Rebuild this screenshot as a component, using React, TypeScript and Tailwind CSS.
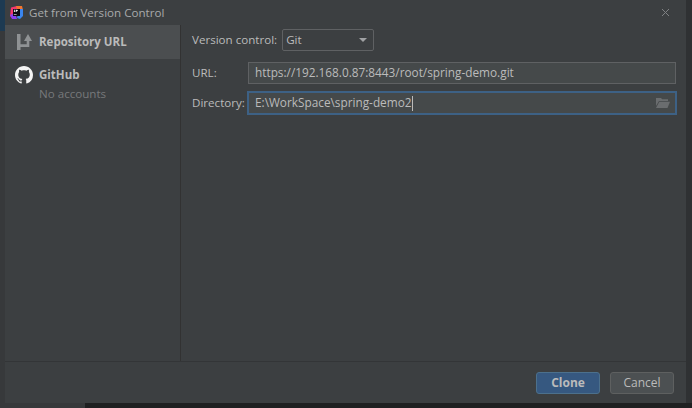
import type { FC } from 'react'

const labelClass = "text-[11.6px] text-[#bbbbbb] font-['Open_Sans',sans-serif]"

const RepoIcon: FC = () => (
  <svg width="16" height="16" viewBox="0 0 16 16" fill="#8f9294">
    <path d="M0 0h3.500v10.300h6.200V7H7l4-7 4 7h-2.700v6H3.500v3H0z" />
  </svg>
)

const GithubIcon: FC = () => (
  <svg width="18" height="18" viewBox="0 0 16 16" fill="#f4f4f4">
    <path d="M8 0C3.58 0 0 3.58 0 8c0 3.54 2.29 6.53 5.47 7.59.4.07.55-.17.55-.38 0-.19-.01-.82-.01-1.49-2.01.37-2.53-.49-2.69-.94-.09-.23-.48-.94-.82-1.13-.28-.15-.68-.52-.01-.53.63-.01 1.08.58 1.23.82.72 1.21 1.87.87 2.33.66.07-.52.28-.87.51-1.07-1.78-.2-3.64-.89-3.64-3.95 0-.87.31-1.59.82-2.15-.08-.2-.36-1.02.08-2.12 0 0 .67-.21 2.2.82.64-.18 1.32-.27 2-.27s1.36.09 2 .27c1.53-1.04 2.2-.82 2.2-.82.44 1.1.16 1.92.08 2.12.51.56.82 1.27.82 2.15 0 3.07-1.87 3.75-3.65 3.95.29.25.54.73.54 1.48 0 1.07-.01 1.93-.01 2.2 0 .21.15.46.55.38A8.01 8.01 0 0 0 16 8c0-4.42-3.58-8-8-8z" />
  </svg>
)

const AppIcon: FC = () => (
  <svg width="13" height="13" viewBox="0 0 13 13">
    <path d="M1 1.500 7 0l1 6-5 7-3-3z" fill="#f5366f" />
    <path d="M6 0h6l1 4-5 2z" fill="#f2762e" />
    <path d="M0 9l5-2 2 6H2z" fill="#8a3ff2" />
    <path d="M9 3h4v7l-3 3-3-1z" fill="#3a86f0" />
    <rect x="3" y="3" width="7" height="7" fill="#0b0b12" />
    <path d="M3.800 3.700h1.500v.5h-.4v1.300h.4v.5H3.800v-.5h.4V4.200h-.4zM5.800 3.700h1.200c.6 0 .8.300.8.800s-.3.800-.8.800h-.5v.7h-.7z" fill="#ffffff" />
    <rect x="3.800" y="8.300" width="2.800" height="0.600" fill="#ffffff" />
  </svg>
)

const FolderIcon: FC = () => (
  <svg width="14" height="10" viewBox="0 0 14 10">
    <path d="M0 0h5l1.200 1.300H12V3H3L0 8z" fill="#6a6d6f" />
    <path d="M3.300 3.800H14L11.500 10H0z" fill="#6a6d6f" />
  </svg>
)

export default function App() {
  return (
    <div className="w-[692px] h-[408px] bg-[#37393b] flex flex-col overflow-hidden font-['Open_Sans',sans-serif]">
      <div className="flex h-[403px]">
        {/* window behind the dialog */}
        <div className="w-[5px] h-full flex flex-col">
          <div className="h-[31px] bg-[#1d3a52]" />
        </div>

        <div className="w-[681px] h-[403px] bg-[#3c3f41] flex flex-col">
          <div className="h-[25px] flex items-center justify-between pl-[5px] pr-[16px]">
            <div className="flex items-center gap-[6px]">
              <AppIcon />
              <span className="text-[11.6px] text-[#a8aaab]">Get from Version Control</span>
            </div>
            <svg width="9" height="9" viewBox="0 0 9 9" className="text-[#7f8183]">
              <path d="M1 1l7 7M8 1l-7 7" stroke="currentColor" strokeWidth="1" />
            </svg>
          </div>

          <div className="flex-1 flex min-h-0 border-b border-[#333537]">
            <aside className="w-[176px] border-r border-[#323232] flex flex-col">
              <div className="h-[34px] bg-[#4b4e50] flex items-center gap-[6px] pl-[12px]">
                <RepoIcon />
                <span className="text-[11.5px] font-bold text-[#bbbbbb]">Repository URL</span>
              </div>
              <div className="flex gap-[6px] pl-[10px] pt-[7px]">
                <GithubIcon />
                <div className="flex flex-col">
                  <span className="text-[11.5px] font-bold text-[#bbbbbb] leading-[18px]">GitHub</span>
                  <span className="text-[11.6px] text-[#77797b] leading-[18px] mt-[1px]">No accounts</span>
                </div>
              </div>
            </aside>

            <main className="flex-1 pl-[11px] pr-[10px] pt-[3px] flex flex-col">
              <div className="flex items-center gap-[5px] h-[23px]">
                <span className={labelClass}>Version control:</span>
                <div className="w-[92px] h-[22px] border border-[#5f6163] rounded-[2px] bg-[#3c3f41] flex items-center justify-between pl-[3px] pr-[6px]">
                  <span className={labelClass}>Git</span>
                  <span className="w-0 h-0 border-x-[4px] border-x-transparent border-t-[4px] border-t-[#a0a2a4]" />
                </div>
              </div>

              <div className="flex items-center h-[23px] mt-[10px]">
                <span className={`${labelClass} w-[56px]`}>URL:</span>
                <div className="flex-1 h-[22px] border border-[#5f6163] bg-[#45494a] flex items-center pl-[6px]">
                  <span className="text-[11.8px] text-[#bbbbbb]">https://192.168.0.87:8443/root/spring-demo.git</span>
                </div>
              </div>

              <div className="flex items-center h-[24px] mt-[7px]">
                <span className={`${labelClass} w-[55px]`}>Directory:</span>
                <div className="flex-1 h-[24px] border-2 border-[#3d6185] bg-[#45494a] flex items-center justify-between pl-[6px] pr-[5px] -mr-[1px]">
                  <span className="flex items-center">
                    <span className="text-[11.8px] text-[#bbbbbb]">E:\WorkSpace\spring-demo2</span>
                    <span className="w-px h-[15px] bg-[#bbbbbb]" />
                  </span>
                  <FolderIcon />
                </div>
              </div>
            </main>
          </div>

          <div className="h-[41px] flex items-center justify-end gap-[10px] pr-[12px]">
            <button className="w-[64px] h-[22px] bg-[#365880] border border-[#4c708c] rounded-[3px] text-[12px] font-bold text-[#bbbbbb]">
              Clone
            </button>
            <button className="w-[64px] h-[22px] bg-[#4c5052] border border-[#5e6060] rounded-[3px] text-[12px] text-[#bbbbbb]">
              Cancel
            </button>
          </div>
        </div>

        <div className="w-[6px] h-full bg-[#2f3133]" />
      </div>

      {/* bottom strip of the window behind */}
      <div className="flex-1 flex">
        <div className="w-[85px] bg-[#37393b]" />
        <div className="flex-1 bg-[#1f2021]" />
      </div>
    </div>
  )
}
